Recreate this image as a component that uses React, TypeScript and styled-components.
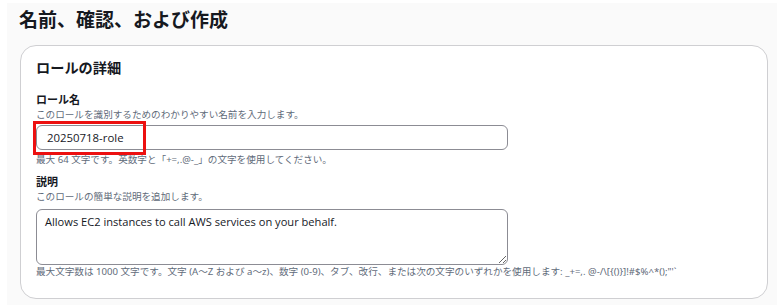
import styled, { createGlobalStyle } from "styled-components";

const GlobalStyle = createGlobalStyle`
    html, body {
        margin: 0;
        padding: 0;
        background: #ffffff;
    }
    body {
        font-family: "Noto Sans", "Noto Sans CJK JP", sans-serif;
        color: #16191f;
    }
`;

const Page = styled.div`
    margin: 3px 0 0 7px;
    height: 302px;
    background: #fafafa;
    padding: 0 9px 0 13px;
    box-sizing: border-box;
    display: flex;
    flex-direction: column;
`;

const PageTitle = styled.h1`
    margin: 0 0 10px -1px;
    height: 32px;
    display: flex;
    align-items: center;
    font-size: 19px;
    font-weight: 700;
    color: #16191f;
`;

const Card = styled.section`
    background: #ffffff;
    border: 1px solid #cfcfd2;
    border-radius: 16px;
    padding: 10px 16px 0 15px;
    height: 254px;
    box-sizing: border-box;
`;

const CardTitle = styled.h2`
    margin: 0 0 12px;
    font-size: 14.2px;
    line-height: 24px;
    font-weight: 700;
`;

const Field = styled.div<{ $gap?: number }>`
    display: flex;
    flex-direction: column;
    margin-bottom: ${(p) => p.$gap ?? 0}px;
`;

const Label = styled.label`
    font-size: 11px;
    font-weight: 700;
    line-height: 16px;
`;

const Hint = styled.div`
    font-size: 9.6px;
    line-height: 14px;
    color: #5f6b7a;
    white-space: nowrap;
`;

const InputWrap = styled.div`
    position: relative;
    width: 472px;
    margin: 3px 0;
`;

const TextInput = styled.input`
    display: block;
    width: 100%;
    height: 25px;
    box-sizing: border-box;
    border: 1px solid #8c8c94;
    border-radius: 6px;
    padding: 0 10px;
    font-family: "Open Sans", "Noto Sans", sans-serif;
    font-size: 11.4px;
    color: #16191f;
    background: #ffffff;
    outline: none;
`;

const Highlight = styled.div`
    position: absolute;
    left: -3px;
    top: -4px;
    width: 113px;
    height: 34px;
    box-sizing: border-box;
    border: 3px solid #ec1010;
    pointer-events: none;
`;

const TextArea = styled.textarea`
    display: block;
    width: 472px;
    height: 56px;
    box-sizing: border-box;
    margin: 5px 0 0;
    border: 1px solid #8c8c94;
    border-radius: 6px;
    padding: 3px 8px;
    font-family: "Open Sans", "Noto Sans", sans-serif;
    font-size: 11.1px;
    line-height: 18px;
    color: #16191f;
    background: #ffffff;
    outline: none;
    resize: vertical;
`;

const descriptionRule =
    "最大文字数は 1000 文字です。文字 (A〜Z および a〜z)、数字 (0-9)、タブ、改行、または次の文字のいずれかを使用します: _+=,. @-/\\[{()}]!#$%^*();\"'`";

const App = () => {
    return (
        <>
            <GlobalStyle />
            <Page>
                <PageTitle>名前、確認、および作成</PageTitle>
                <Card>
                    <CardTitle>ロールの詳細</CardTitle>
                    <Field $gap={7}>
                        <Label>ロール名</Label>
                        <Hint>このロールを識別するためのわかりやすい名前を入力します。</Hint>
                        <InputWrap>
                            <TextInput readOnly value="20250718-role" />
                            <Highlight />
                        </InputWrap>
                        <Hint>最大 64 文字です。英数字と「+=,.@-_」の文字を使用してください。</Hint>
                    </Field>
                    <Field>
                        <Label>説明</Label>
                        <Hint>このロールの簡単な説明を追加します。</Hint>
                        <TextArea readOnly value="Allows EC2 instances to call AWS services on your behalf." />
                        <Hint>{descriptionRule}</Hint>
                    </Field>
                </Card>
            </Page>
        </>
    );
};

export default App;
